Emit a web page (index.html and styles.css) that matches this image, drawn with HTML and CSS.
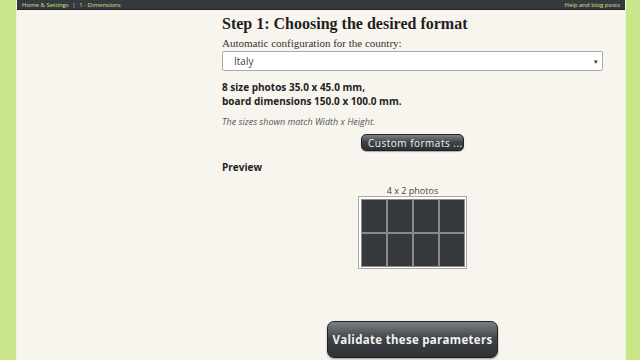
FILE: index.html
```html
<!DOCTYPE html>
<html>
<head>
  <title>Dimensions</title>
  <link rel="stylesheet" href="styles.css">
</head>
<body>
  <div class="page">
    <div class="topbar">
      <div class="crumbs"><a href="#">Home &amp; Settings</a> <span class="sep">|</span> <a href="#">1 - Dimensions</a></div>
      <a href="#" class="help">Help and blog posts</a>
    </div>

    <div class="layout">
      <div class="aside"></div>
      <div class="main">
        <h1>Step 1: Choosing the desired format</h1>
        <label class="country-label">Automatic configuration for the country:</label>
        <div class="select">
          <span>Italy</span>
          <span class="arrow">&#9662;</span>
        </div>

        <p class="summary">8 size photos 35.0 x 45.0 mm,<br>board dimensions 150.0 x 100.0 mm.</p>
        <p class="note">The sizes shown match Width x Height.</p>

        <div class="center">
          <button class="btn btn-small">Custom formats ...</button>
        </div>

        <h4>Preview</h4>
        <div class="preview">
          <div class="caption">4 x 2 photos</div>
          <div class="board">
            <div class="cell"></div><div class="cell"></div><div class="cell"></div><div class="cell"></div>
            <div class="cell"></div><div class="cell"></div><div class="cell"></div><div class="cell"></div>
          </div>
        </div>

        <div class="center validate">
          <button class="btn btn-big">Validate these parameters</button>
        </div>
      </div>
    </div>
  </div>
</body>
</html>
```

FILE: styles.css
```css
body {
  margin: 0;
  background-color: #c9e68a;
  font-family: "Open Sans", "Noto Sans", sans-serif;
  color: #222;
}

.page {
  margin: 0 14px 0 16px;
  min-height: 360px;
  background: #f8f5ee;
  border-left: 1px solid #eef5dc;
  border-right: 1px solid #eef5dc;
}

.topbar {
  display: flex;
  justify-content: space-between;
  align-items: center;
  height: 9px;
  padding: 0 5px;
  background: #35383d;
  border-bottom: 1px solid #202225;
  font-size: 6px;
}

.topbar a {
  color: #c9e68a;
  text-decoration: none;
}

.crumbs .sep {
  color: #ddd;
  margin: 0 2px;
}

.layout {
  display: flex;
}

.aside {
  width: 205px;
}

.main {
  width: 381px;
}

h1 {
  font-family: "Liberation Serif", serif;
  font-size: 16px;
  line-height: 20px;
  margin: 4px 0 3px;
  color: #1e1e1e;
}

.country-label {
  display: block;
  font-family: "Liberation Serif", serif;
  font-size: 11px;
  line-height: 13px;
  color: #333;
  margin-bottom: 1px;
}

.select {
  display: flex;
  justify-content: space-between;
  align-items: center;
  height: 18px;
  padding: 0 4px 0 11px;
  background: #fff;
  border: 1px solid #a9a9a9;
  border-radius: 2px;
  font-size: 10px;
  color: #444;
}

.select .arrow {
  font-size: 7px;
  color: #333;
}

.summary {
  font-size: 10px;
  font-weight: bold;
  line-height: 14px;
  margin: 9px 0 7px;
}

.note {
  font-size: 9px;
  font-style: italic;
  color: #555;
  margin: 0 0 6px;
}

.center {
  display: flex;
  justify-content: center;
}

.btn {
  border: 1px solid #222;
  color: #f2f2f2;
  font-family: "Open Sans", sans-serif;
  background: linear-gradient(#7c7f84, #3d4045 50%, #2e3135);
  cursor: pointer;
  white-space: nowrap;
}

.btn-small {
  font-size: 10px;
  letter-spacing: 0.5px;
  padding: 0 6px;
  height: 17px;
  width: 103px;
  border-radius: 5px;
  box-shadow: 0 1px 1px rgba(0,0,0,0.3);
}

h4 {
  font-size: 10px;
  margin: 9px 0 12px;
}

.preview {
  display: flex;
  flex-direction: column;
  align-items: center;
}

.caption {
  font-size: 9px;
  color: #444;
  line-height: 10px;
}

.board {
  display: grid;
  grid-template-columns: repeat(4, 24px);
  grid-template-rows: repeat(2, 32px);
  gap: 2px;
  padding: 3px 2px 2px 3px;
  background: #fff;
  border: 1px solid #a8a8a8;
}

.cell {
  background: #36393e;
  box-shadow: 0 0 0 1px #8a8a8a;
}

.validate {
  margin-top: 52px;
}

.btn-big {
  width: 171px;
  height: 37px;
  padding: 0;
  font-size: 11.5px;
  font-weight: bold;
  letter-spacing: 0.3px;
  border-radius: 7px;
  box-shadow: 0 1px 2px rgba(0,0,0,0.4);
}
```
